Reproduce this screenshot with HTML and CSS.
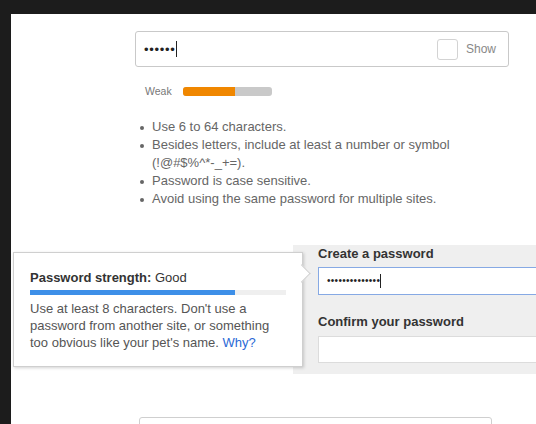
FILE: index.html
```html
<!DOCTYPE html>
<html>
<head>
<meta charset="utf-8">
<link rel="stylesheet" href="styles.css">
</head>
<body>
<div class="page">
  <div class="field-top">
    <span class="dots">••••••</span><span class="caret"></span>
    <span class="spacer"></span>
    <span class="checkbox"></span>
    <span class="show">Show</span>
  </div>
  <div class="strength">
    <span class="weak">Weak</span>
    <span class="meter"><span class="meter-fill"></span></span>
  </div>
  <ul class="rules">
    <li><span>Use 6 to 64 characters.</span></li>
    <li><span>Besides letters, include at least a number or symbol (!@#$%^*-_+=).</span></li>
    <li><span>Password is case sensitive.</span></li>
    <li><span>Avoid using the same password for multiple sites.</span></li>
  </ul>
  <div class="signup">
    <div class="panel">
      <div class="label">Create a password</div>
      <div class="input focused"><span class="dots small">••••••••••••••</span><span class="caret short"></span></div>
      <div class="label second">Confirm your password</div>
      <div class="input"></div>
    </div>
    <div class="tooltip">
      <span class="arrow"></span>
      <div class="tip-title"><b>Password strength:</b> Good</div>
      <div class="tip-bar"><span class="tip-fill"></span></div>
      <p class="tip-text">Use at least 8 characters. Don't use a password from another site, or something too obvious like your pet's name. <span class="why">Why?</span></p>
    </div>
  </div>
  <div class="field-bottom"></div>
</div>
</body>
</html>
```

FILE: styles.css
```css
html, body {
  margin: 0;
  padding: 0;
  height: 100%;
  background: #1c1c1c;
  overflow: hidden;
}
body {
  font-family: "Liberation Sans", Arial, sans-serif;
  padding: 14px 0 0 11px;
  box-sizing: border-box;
}
.page {
  background: #fff;
  height: 410px;
  overflow: hidden;
  padding-top: 17px;
  box-sizing: border-box;
}
.field-top {
  margin-left: 124px;
  width: 374px;
  height: 36px;
  box-sizing: border-box;
  border: 1px solid #c9c9c9;
  border-radius: 3px;
  display: flex;
  align-items: center;
  padding: 0 12px 0 8px;
}
.dots {
  font-size: 13px;
  letter-spacing: 0.7px;
  color: #222;
  line-height: 1;
}
.dots.small {
  font-size: 10px;
  letter-spacing: 0.3px;
}
.caret {
  display: inline-block;
  width: 1px;
  height: 16px;
  background: #222;
}
.caret.short {
  height: 14px;
}
.spacer { flex: 1; }
.checkbox {
  width: 19px;
  height: 19px;
  border: 1px solid #d3d3d3;
  border-radius: 3px;
  margin-right: 8px;
}
.show {
  font-size: 12px;
  color: #888;
}
.strength {
  margin: 18px 0 0 134px;
  height: 12px;
  display: flex;
  align-items: center;
}
.weak {
  font-size: 10.5px;
  color: #777;
  width: 38px;
}
.meter {
  width: 89px;
  height: 9px;
  border-radius: 3px;
  background: #c9c9c9;
  overflow: hidden;
  display: flex;
}
.meter-fill {
  width: 52px;
  background: #f08700;
}
.rules {
  list-style: none;
  margin: 21px 0 0 129px;
  padding: 0;
  font-size: 13px;
  line-height: 18px;
  color: #666;
}
.rules li {
  display: flex;
  gap: 8px;
}
.rules li::before {
  content: "";
  flex: none;
  width: 4px;
  height: 4px;
  border-radius: 50%;
  background: #666;
  margin-top: 8px;
}
.rules li span {
  max-width: 330px;
}
.signup {
  position: relative;
  margin-top: 37px;
  padding-left: 282px;
}
.panel {
  background: #efefef;
  height: 129px;
  box-sizing: border-box;
  padding: 1px 0 0 25px;
  overflow: hidden;
}
.label {
  font-size: 13px;
  font-weight: bold;
  color: #333;
  line-height: 16px;
}
.label.second {
  margin-top: 19px;
}
.input {
  width: 260px;
  height: 27px;
  box-sizing: border-box;
  background: #fff;
  border: 1px solid #dcdcdc;
  margin-top: 6px;
  display: flex;
  align-items: center;
  padding-left: 8px;
}
.input.focused {
  height: 28px;
  margin-top: 5px;
  border-color: #86a9e4;
}
.tooltip {
  position: absolute;
  left: 2px;
  top: 7px;
  width: 290px;
  box-sizing: border-box;
  background: #fff;
  border: 1px solid #cfcfcf;
  box-shadow: 1px 1px 3px rgba(0,0,0,0.18);
  padding: 16px 16px 15px 16px;
  color: #444;
}
.arrow {
  position: absolute;
  right: -6px;
  top: 14px;
  width: 12px;
  height: 12px;
  background: #fff;
  border-top: 1px solid #cfcfcf;
  border-right: 1px solid #cfcfcf;
  transform: rotate(45deg);
}
.tip-title {
  font-size: 13px;
  line-height: 17px;
  color: #333;
}
.tip-bar {
  margin-top: 4px;
  width: 256px;
  height: 5px;
  background: #efefef;
  display: flex;
}
.tip-fill {
  width: 205px;
  background: #3d8fe8;
}
.tip-text {
  margin: 5px 0 0;
  font-size: 13px;
  line-height: 17px;
  color: #555;
}
.why {
  color: #2a6ad6;
}
.field-bottom {
  margin: 43px 0 0 128px;
  width: 351px;
  height: 30px;
  border: 1px solid #cfcfcf;
  border-radius: 3px;
}
```
